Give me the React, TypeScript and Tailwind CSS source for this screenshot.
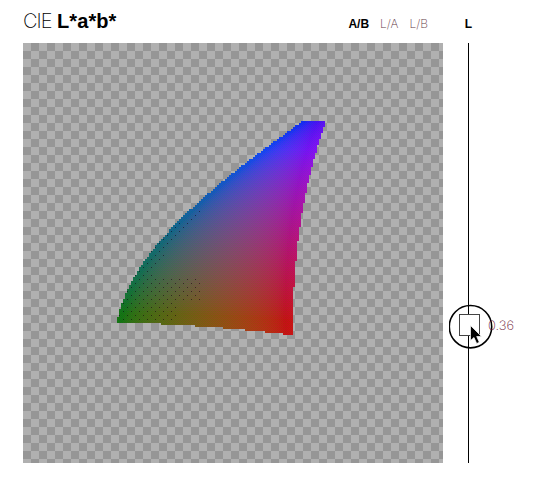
import { useLayoutEffect, useRef } from "react";

const SIZE = 420;

// Inverse of the CIE f() companding function.
const finv = (t: number) => (t > 6 / 29 ? t * t * t : (108 / 841) * (t - 4 / 29));
const gamma = (v: number) =>
  255 * (v <= 0.0031308 ? 12.92 * v : 1.055 * Math.pow(v, 1 / 2.4) - 0.055);

function labToRgb(L: number, a: number, b: number) {
  const fy = (L + 16) / 116;
  const x = 0.9505 * finv(fy + a / 500);
  const y = finv(fy);
  const z = 1.089 * finv(fy - b / 200);
  return [
    3.2406 * x - 1.5372 * y - 0.4986 * z,
    -0.9689 * x + 1.8758 * y + 0.0415 * z,
    0.0557 * x - 0.204 * y + 1.057 * z,
  ];
}

const BAYER = [0, 8, 2, 10, 12, 4, 14, 6, 3, 11, 1, 9, 15, 7, 13, 5];

function Gamut({ lightness }: { lightness: number }) {
  const ref = useRef<HTMLCanvasElement>(null);
  useLayoutEffect(() => {
    const ctx = ref.current?.getContext("2d");
    if (!ctx) return;
    const img = ctx.createImageData(SIZE, SIZE);
    for (let y = 0; y < SIZE; y++) {
      for (let x = 0; x < SIZE; x++) {
        // Sample in 2px blocks, then dither each pixel on its own.
        const a = (x - (x % 2) + 0.5 - 167) / 1.67;
        const b = (y - (y % 2) + 0.5 - 218.5) / 1.39;
        const rgb = labToRgb(lightness, a, b);
        if (rgb.some((v) => v < -0.0015 || v > 1.002)) continue;
        const d = (BAYER[(y % 4) * 4 + (x % 4)] / 15 - 0.5) * 20;
        const i = (y * SIZE + x) * 4;
        const row = Math.floor(y / 4);
        const speck =
          y % 4 === 0 && (x + (row % 2) * 4) % 8 === 0 && a < 6 && a + b < 22 + (row % 5) * 3 && a + b > -34 &&
          (b > 12 || (rgb[0] < 0.03 && b > -50));
        const enc = rgb.map((v) => gamma(Math.max(0, Math.min(1, v))));
        const mean = (enc[0] + enc[1] + enc[2]) / 3;
        enc.forEach((v, k) => {
          const base = Math.max(20, Math.min(240, mean + (v - mean) * 1.14 + 8));
          img.data[i + k] = speck ? base * 0.5 : base + (k === 1 ? -d : d) * 0.9;
        });
        img.data[i + 3] = 255;
      }
    }
    ctx.putImageData(img, 0, 0);
  }, [lightness]);
  return <canvas ref={ref} width={SIZE} height={SIZE} className="block" />;
}

export default function App() {
  return (
    <div className="flex h-[500px] w-[560px] bg-white pl-[23px] font-['Liberation_Sans',Arial,sans-serif] text-black">
      <main className="w-[420px]">
        <header className="flex h-[43px] items-start justify-between pr-[15px]">
          <h1 className="flex gap-[5px] pt-[8px] text-[20px] leading-[27px]">
            <span className="w-[29px] font-['Inter',sans-serif] font-[200] tracking-[-0.9px]">CIE</span>
            <b className="tracking-[0.1px]">L*a*b*</b>
          </h1>
          <nav className="flex gap-[11px] pt-[16px] text-[12px] leading-4">
            <b>A/B</b>
            <span className="font-['Inter',sans-serif] font-[200] text-[#5f3a46]">L/A</span>
            <span className="font-['Inter',sans-serif] font-[200] text-[#5f3a46]">L/B</span>
          </nav>
        </header>
        <div className="h-[420px] bg-[repeating-conic-gradient(#969696_0_25%,#b0b0b0_0_50%)] bg-[length:16px_16px]">
          <Gamut lightness={36} />
        </div>
      </main>
      <aside className="flex w-[51px] flex-col items-center">
        <b className="h-[43px] pt-[16px] text-[12px] leading-4">L</b>
        <div className="relative h-[420px] w-[1px] bg-black">
          <svg className="absolute top-[260px] left-[-19px]" width="46" height="46" fill="none">
            <rect x="10.5" y="11.5" width="20" height="21" fill="white" stroke="#444" />
            <circle cx="21.5" cy="23.7" r="21.2" stroke="black" strokeWidth="1.6" />
            <path d="M21.5 22.5v15l3.5-3 2.7 6 2.6-1.2-2.6-5.8H32.5z" fill="black" stroke="white" strokeWidth=".7" />
          </svg>
          <span className="absolute top-[273px] left-[20px] font-['Inter',sans-serif] text-[13px] leading-[18px] font-[200] text-[#6a1434]">
            0.36
          </span>
        </div>
      </aside>
    </div>
  );
}
